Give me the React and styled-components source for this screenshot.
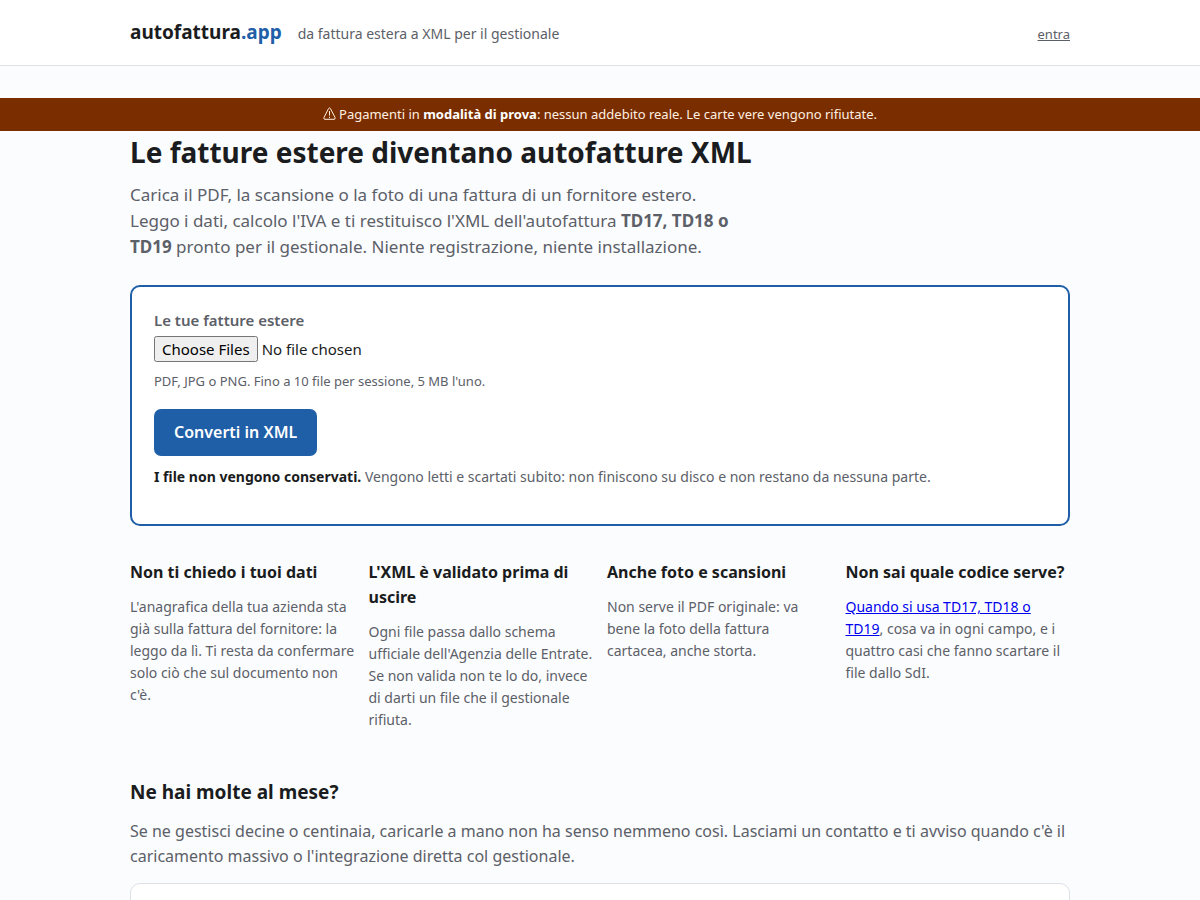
import * as React from 'react';
import styled, { createGlobalStyle } from 'styled-components';

const GlobalStyle = createGlobalStyle`
  * {
    box-sizing: border-box;
  }
  body {
    margin: 0;
    background: #fbfcfe;
    color: #1a1c20;
    font-family: "Noto Sans", sans-serif;
    font-size: 16px;
    line-height: 25px;
  }
`;

const Wrap = styled.div`
  max-width: 980px;
  margin: 0 auto;
  padding: 0 20px;
`;

const Header = styled.header`
  background: #fff;
  border-bottom: 1px solid #dde1e8;
`;

const HeaderRow = styled(Wrap)`
  display: flex;
  align-items: baseline;
  gap: 16px;
  padding-top: 17px;
  padding-bottom: 17px;
`;

const Logo = styled.span`
  font-size: 19px;
  line-height: 31px;
  font-weight: 700;

  span {
    color: #1f5fa8;
  }
`;

const Tagline = styled.span`
  color: #5c6068;
  font-size: 14px;
`;

const Login = styled.a`
  margin-left: auto;
  color: #5c6068;
  font-size: 13px;
`;

const Banner = styled.div`
  margin-top: 32px;
  padding: 6px 16px;
  background: #7a2e00;
  color: #ffefe0;
  font-size: 13px;
  line-height: 21px;
  text-align: center;

  strong {
    color: #fff;
  }
`;

const WarnIcon = styled.svg`
  width: 13px;
  height: 13px;
  margin-right: 3px;
  vertical-align: -1px;
`;

const Title = styled.h1`
  margin: 0 0 12px;
  padding-top: 4px;
  font-size: 28px;
  line-height: 35px;
`;

const Lede = styled.p`
  max-width: 620px;
  margin: 0 0 25px;
  color: #5c6068;
  font-size: 17px;
  line-height: 26px;
`;

const Card = styled.form`
  padding: 22px;
  background: #fff;
  border: ${(p) => (p.$main ? '2px solid #1f5fa8' : '1px solid #dde1e8')};
  border-radius: 10px;
`;

const Label = styled.label`
  display: block;
  margin-bottom: 4px;
  color: #5c6068;
  font-size: 15px;
  line-height: 23px;
  font-weight: 600;
`;

const FileInput = styled.input`
  display: block;
  width: 100%;
  font-family: inherit;
  font-size: 15px;

  &::file-selector-button {
    font: inherit;
  }
`;

const Hint = styled.p`
  margin: 9px 0 18px;
  color: #5c6068;
  font-size: 13px;
  line-height: 20px;
`;

const Button = styled.button`
  display: block;
  padding: 11px 20px;
  border: 0;
  border-radius: 7px;
  background: #1f5fa8;
  color: #fff;
  font-family: inherit;
  font-size: 16px;
  line-height: 25px;
  font-weight: 600;
  cursor: pointer;
`;

const Small = styled.p`
  margin: 0;
  color: #5c6068;
  font-size: 14px;
  line-height: 22px;
`;

const Note = styled(Small)`
  margin: 10px 0 14px;

  strong {
    color: #1a1c20;
  }
`;

const Features = styled.section`
  display: grid;
  grid-template-columns: repeat(auto-fit, minmax(210px, 1fr));
  gap: 14px;
  margin: 34px 0 46px;
`;

const FeatureTitle = styled.h3`
  margin: 0 0 11px;
  font-size: 16px;
  line-height: 25px;
`;

const Heading = styled.h2`
  margin: 0 0 12px;
  font-size: 19px;
  line-height: 30px;
`;

const Text = styled.p`
  margin: 0 0 14px;
  color: #5c6068;
`;

const Field = styled.input`
  width: 100%;
  padding: 8px 10px;
  border: 1px solid #dde1e8;
  border-radius: 7px;
  font-family: inherit;
  font-size: 16px;
`;

export default function App() {
  return (
    <>
      <GlobalStyle />
      <Header>
        <HeaderRow>
          <Logo>autofattura<span>.app</span></Logo>
          <Tagline>da fattura estera a XML per il gestionale</Tagline>
          <Login href="#entra">entra</Login>
        </HeaderRow>
      </Header>

      <Banner>
        <WarnIcon viewBox="0 0 13 13" fill="none" stroke="currentColor" aria-hidden="true">
          <path d="M5.6 1.5Q6.5.2 7.4 1.5L12 10.4Q12.6 12.3 11 12.3H2Q.4 12.3 1 10.4Z" />
          <path d="M6.5 4v4.6M6.5 9.8v1.1" />
        </WarnIcon>
        Pagamenti in <strong>modalità di prova</strong>: nessun addebito reale. Le carte vere vengono rifiutate.
      </Banner>

      <Wrap as="main">
        <Title>Le fatture estere diventano autofatture XML</Title>
        <Lede>
          Carica il PDF, la scansione o la foto di una fattura di un fornitore estero.
          Leggo i dati, calcolo l'IVA e ti restituisco l'XML dell'autofattura{' '}
          <strong>TD17, TD18 o TD19</strong> pronto per il gestionale. Niente
          registrazione, niente installazione.
        </Lede>

        <Card $main onSubmit={(e) => e.preventDefault()}>
          <Label htmlFor="files">Le tue fatture estere</Label>
          <FileInput id="files" type="file" accept=".pdf,.jpg,.jpeg,.png" multiple />
          <Hint>PDF, JPG o PNG. Fino a 10 file per sessione, 5 MB l'uno.</Hint>
          <Button type="submit">Converti in XML</Button>
          <Note>
            <strong>I file non vengono conservati.</strong> Vengono letti e scartati
            subito: non finiscono su disco e non restano da nessuna parte.
          </Note>
        </Card>

        <Features>
          <div>
            <FeatureTitle>Non ti chiedo i tuoi dati</FeatureTitle>
            <Small>
              L'anagrafica della tua azienda sta già sulla fattura del fornitore: la
              leggo da lì. Ti resta da confermare solo ciò che sul documento non c'è.
            </Small>
          </div>
          <div>
            <FeatureTitle>L'XML è validato prima di uscire</FeatureTitle>
            <Small>
              Ogni file passa dallo schema ufficiale dell'Agenzia delle Entrate. Se non
              valida non te lo do, invece di darti un file che il gestionale rifiuta.
            </Small>
          </div>
          <div>
            <FeatureTitle>Anche foto e scansioni</FeatureTitle>
            <Small>
              Non serve il PDF originale: va bene la foto della fattura cartacea, anche
              storta.
            </Small>
          </div>
          <div>
            <FeatureTitle>Non sai quale codice serve?</FeatureTitle>
            <Small>
              <a href="#guida">Quando si usa TD17, TD18 o TD19</a>, cosa va in ogni
              campo, e i quattro casi che fanno scartare il file dallo SdI.
            </Small>
          </div>
        </Features>

        <Heading>Ne hai molte al mese?</Heading>
        <Text>
          Se ne gestisci decine o centinaia, caricarle a mano non ha senso nemmeno così.
          Lasciami un contatto e ti avviso quando c'è il caricamento massivo o
          l'integrazione diretta col gestionale.
        </Text>
        <Card onSubmit={(e) => e.preventDefault()}>
          <Field type="email" aria-label="Email" />
        </Card>
      </Wrap>
    </>
  );
}
